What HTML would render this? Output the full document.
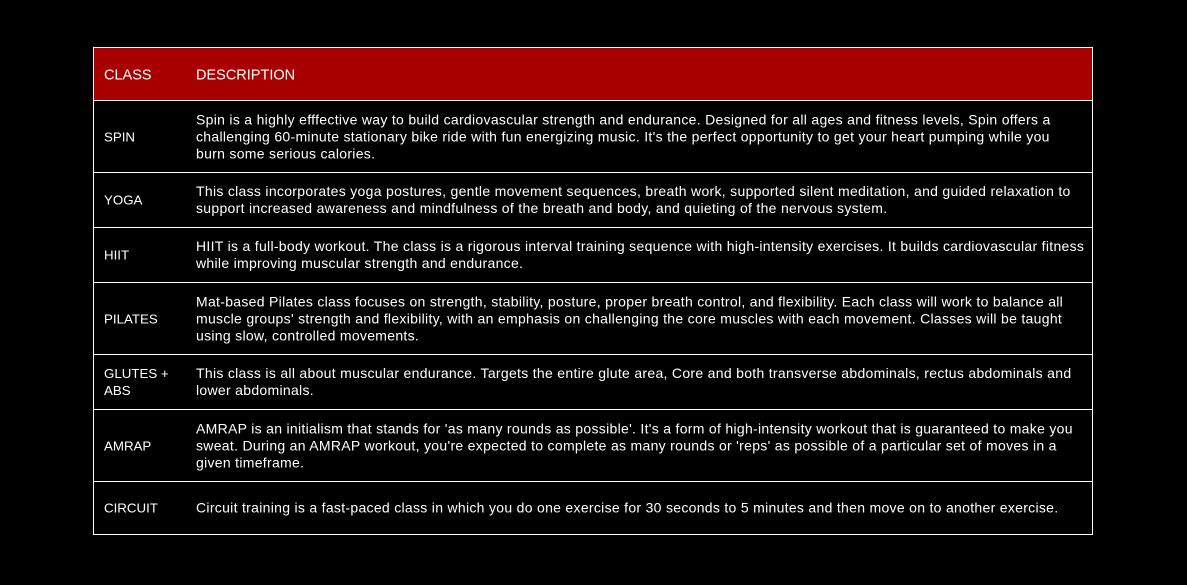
<!DOCTYPE html>
<html><head><style>
body{margin:0;background:#000;width:1187px;height:585px;overflow:hidden;font-family:"Liberation Sans",sans-serif;color:#fff}
.t{position:absolute;left:93px;top:47px;width:998px;border:1px solid #fff}
.r{position:relative;border-top:1px solid #fff;box-sizing:border-box}
.r:first-child{border-top:none}
.h{background:#a80000;height:52px;font-size:14.5px}
.h .c1,.h .c2{top:calc(50% + 2px)}
.c1,.c2{position:absolute;top:50%;transform:translateY(-50%);white-space:nowrap;line-height:17px}
.c1{left:10px}
.c2{left:102px}
.b{font-size:13.3px}
.b .c2{font-size:14px;letter-spacing:0.3px}
</style></head><body>
<div class="t">
<div class="r h"><div class="c1">CLASS</div><div class="c2">DESCRIPTION</div></div>
<div class="r b" style="height:72px"><div class="c1">SPIN</div><div class="c2">Spin is a highly efffective way to build cardiovascular strength and endurance. Designed for all ages and fitness levels, Spin offers a<br>challenging 60-minute stationary bike ride with fun energizing music. It's the perfect opportunity to get your heart pumping while you<br>burn some serious calories.</div></div>
<div class="r b" style="height:55px"><div class="c1">YOGA</div><div class="c2">This class incorporates yoga postures, gentle movement sequences, breath work, supported silent meditation, and guided relaxation to<br>support increased awareness and mindfulness of the breath and body, and quieting of the nervous system.</div></div>
<div class="r b" style="height:55px"><div class="c1">HIIT</div><div class="c2">HIIT is a full-body workout. The class is a rigorous interval training sequence with high-intensity exercises. It builds cardiovascular fitness<br>while improving muscular strength and endurance.</div></div>
<div class="r b" style="height:72px"><div class="c1">PILATES</div><div class="c2">Mat-based Pilates class focuses on strength, stability, posture, proper breath control, and flexibility. Each class will work to balance all<br>muscle groups' strength and flexibility, with an emphasis on challenging the core muscles with each movement. Classes will be taught<br>using slow, controlled movements.</div></div>
<div class="r b" style="height:55px"><div class="c1">GLUTES +<br>ABS</div><div class="c2">This class is all about muscular endurance. Targets the entire glute area, Core and both transverse abdominals, rectus abdominals and<br>lower abdominals.</div></div>
<div class="r b" style="height:72px"><div class="c1">AMRAP</div><div class="c2">AMRAP is an initialism that stands for 'as many rounds as possible'. It's a form of high-intensity workout that is guaranteed to make you<br>sweat. During an AMRAP workout, you're expected to complete as many rounds or 'reps' as possible of a particular set of moves in a<br>given timeframe.</div></div>
<div class="r b" style="height:53px"><div class="c1">CIRCUIT</div><div class="c2">Circuit training is a fast-paced class in which you do one exercise for 30 seconds to 5 minutes and then move on to another exercise.</div></div>
</div>
</body></html>
